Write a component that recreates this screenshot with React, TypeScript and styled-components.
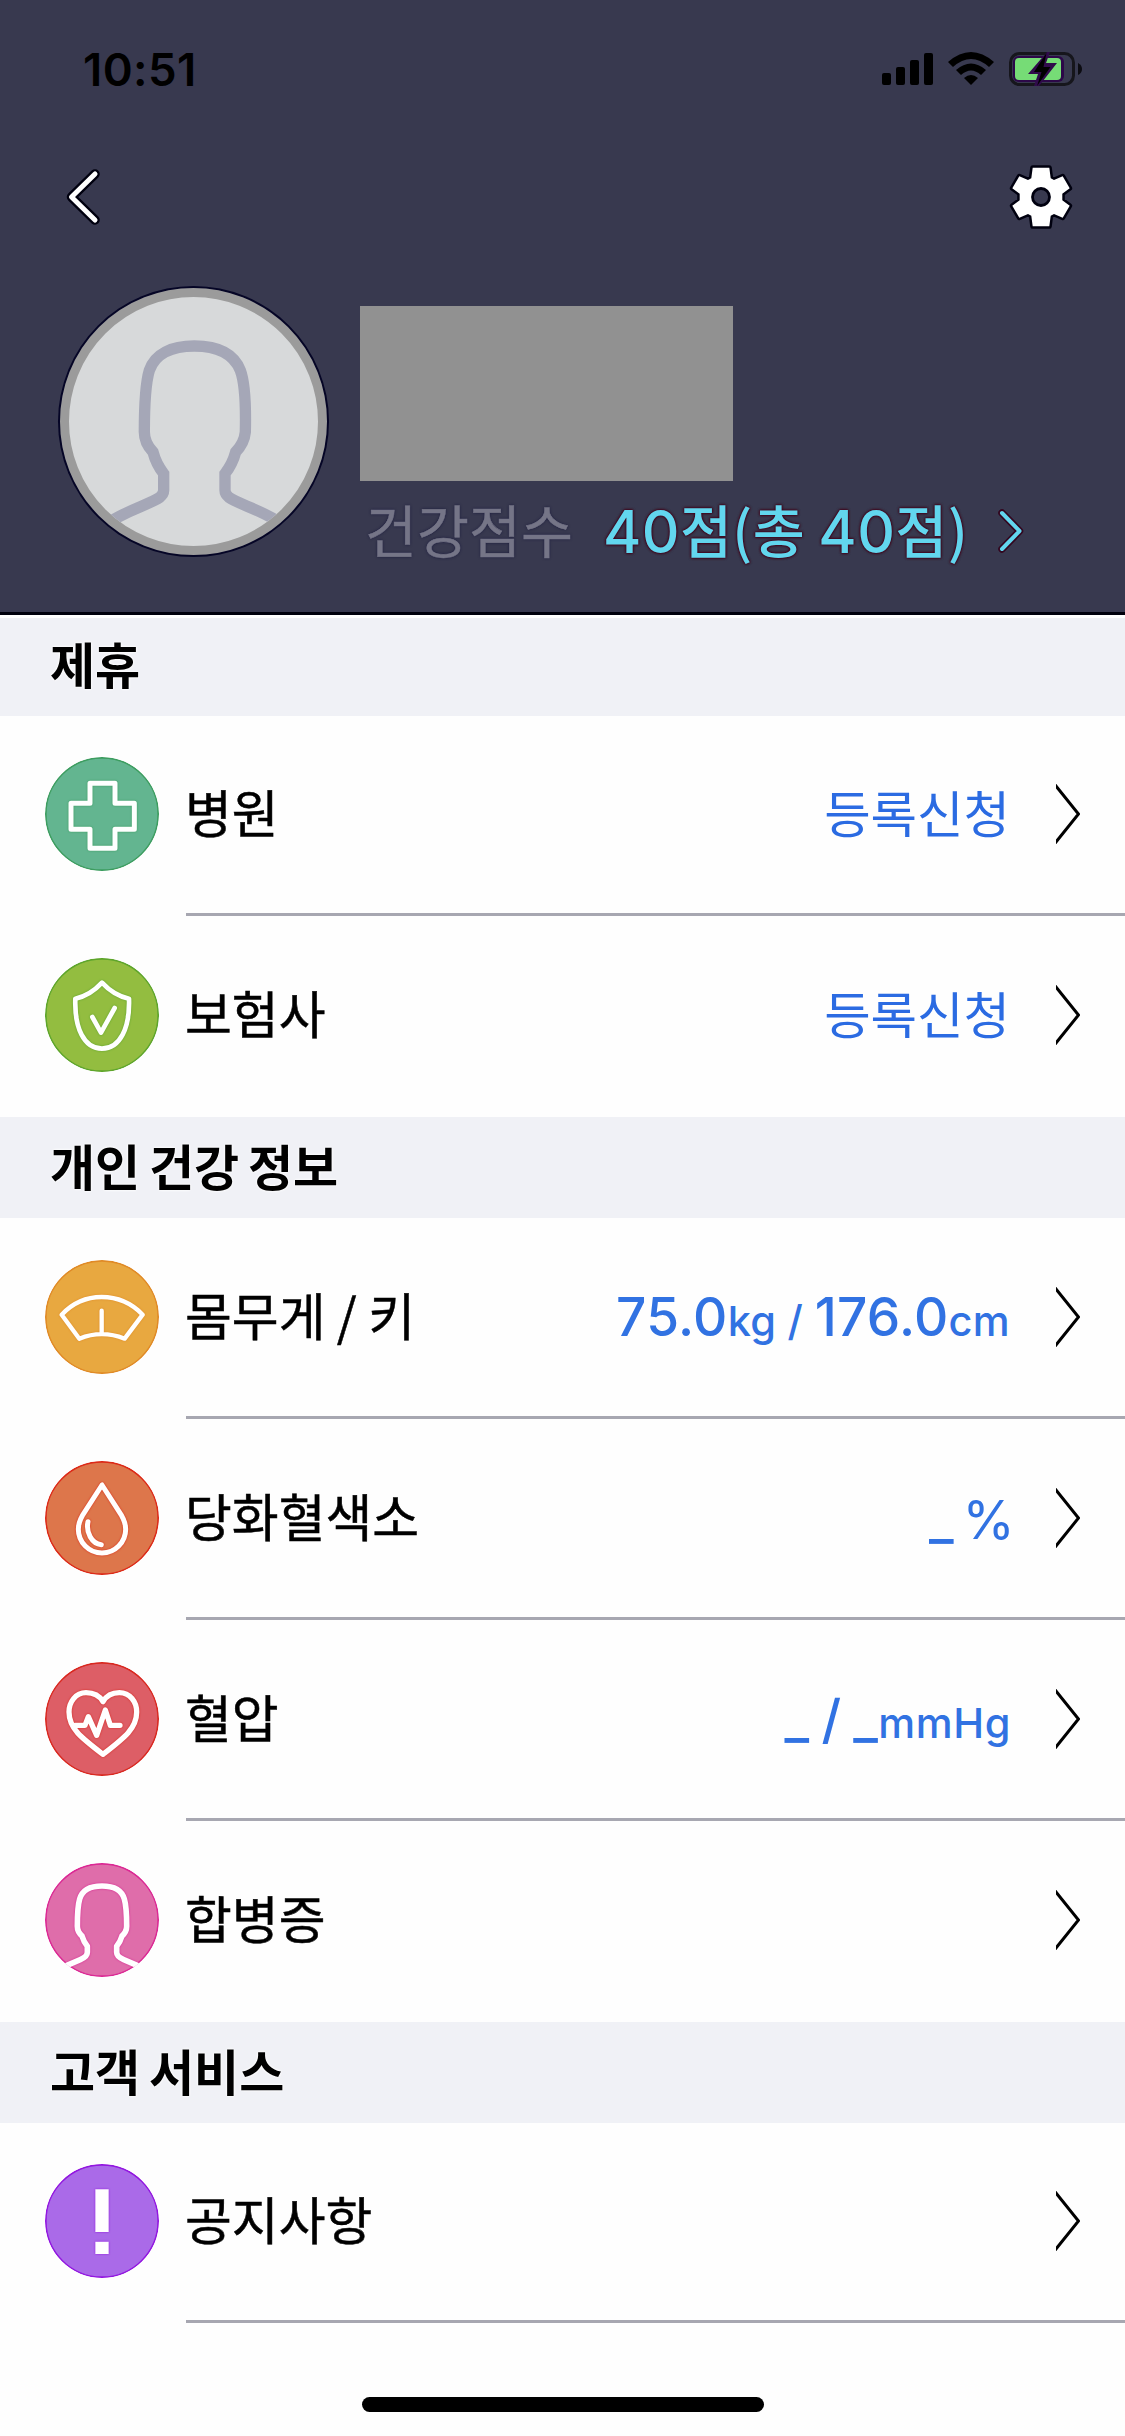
import React from "react";
import styled, { createGlobalStyle } from "styled-components";

const GlobalStyle = createGlobalStyle`
  * { box-sizing: border-box; }
  body { margin: 0; background: #fefefe; }
  svg { display: block; flex: none; }
`;

const korean = `"Noto Sans CJK KR", "Noto Sans", sans-serif`;
const latin = `Inter, "Noto Sans CJK KR", sans-serif`;

const Screen = styled.div`
  width: 1125px;
  height: 2436px;
  overflow: hidden;
  display: flex;
  flex-direction: column;
  background: #fefefe;
  color: #000;
  font-family: ${korean};
`;

const Header = styled.header`
  height: 615px;
  flex: none;
  background: #38394f;
  border-bottom: 3px solid #00000c;
`;

const StatusBar = styled.div`
  height: 137px;
  padding: 0 43px 0 83px;
  display: flex;
  justify-content: space-between;
  align-items: center;
`;

const Clock = styled.time`
  padding-top: 2px;
  font: 600 45.5px/50px ${latin};
  letter-spacing: 0.4px;
`;

const StatusIcons = styled.div`
  display: flex;
  gap: 15px;
`;

const NavBar = styled.nav`
  height: 120px;
  padding: 0 50px 0 63px;
  display: flex;
  justify-content: space-between;
  align-items: center;
`;

const Profile = styled.section`
  display: flex;
  padding: 31px 0 0 60px;
`;

const Avatar = styled.div`
  width: 267px;
  height: 267px;
  flex: none;
  border: 9px solid #9b9b9b;
  border-radius: 50%;
  background: #d7d9da;
  box-shadow: 0 0 0 2px #050526;
  overflow: hidden;
`;

const ProfileInfo = styled.div`
  margin-left: 33px;
  padding-top: 18px;
`;

const NameBlock = styled.div`
  width: 373px;
  height: 175px;
  background: #919191;
`;

const ScoreLine = styled.div`
  display: flex;
  align-items: center;
  height: 100px;
  padding-left: 5px;
  font-size: 56.5px;
  line-height: 94px;
  white-space: nowrap;
`;

const ScoreLabel = styled.span`
  height: 100px;
  width: 238px;
  color: #757587;
  -webkit-text-stroke: 0.5px #757587;
  text-shadow: 0 0 3px #16163a;
`;

const Score = styled.span`
  height: 100px;
  width: 395px;
  font-weight: 500;
  letter-spacing: 0.4px;
  color: #62d6ee;
  text-shadow: 0 0 3px #400018, 0 0 2px #400018, 0 0 3px #400018;
`;

const ScoreDigits = styled.span`
  font-family: Inter, sans-serif;
  font-size: 58.5px;
  font-weight: 500;
  line-height: 1;
`;

const SectionTitle = styled.h2<{ $first?: boolean }>`
  margin: 0;
  height: 101px;
  flex: none;
  padding-left: 50px;
  background: #f0f1f6;
  box-shadow: ${(p) => (p.$first ? "inset 0 3px #fff" : "none")};
  font-size: 49px;
  font-weight: 700;
  line-height: 95px;
  word-spacing: -2.3px;
  text-shadow: 0 0 3px #fff, 0 0 3px #fff;
`;

const Row = styled.div<{ $height: number }>`
  height: ${(p) => p.$height}px;
  flex: none;
  display: flex;
  flex-direction: column;
  justify-content: flex-end;
  padding-left: 45px;
`;

const RowBody = styled.div`
  height: 114px;
  margin-bottom: 42px;
  padding-right: 45px;
  display: flex;
  align-items: center;
`;

const Divider = styled.div<{ $visible: boolean }>`
  height: 3px;
  margin-left: 141px;
  background: ${(p) => (p.$visible ? "#a7a7b1" : "transparent")};
`;

const Label = styled.span`
  margin-left: 26px;
  padding-bottom: 6px;
  flex: 1;
  font-size: 50.9px;
  line-height: 80px;
  white-space: nowrap;
  -webkit-text-stroke: 0.5px #000;
`;

const Value = styled.span`
  margin-right: 46px;
  padding-bottom: 6px;
  color: #2b6be2;
  font-size: 50.5px;
  line-height: 80px;
  white-space: pre;
`;

const Measure = styled(Value)<{ $wordSpacing?: number; $shift?: number }>`
  margin-right: ${(p) => 46 - (p.$shift ?? 0)}px;
  padding: 3px 0 0;
  font-family: ${latin};
  font-weight: 500;
  font-size: 53.2px;
  letter-spacing: 0.3px;
  word-spacing: ${(p) => p.$wordSpacing ?? 0}px;
  color: #3172e2;
`;

const Unit = styled.span`
  font-size: 41.5px;
`;

const Pressure = styled.span`
  font-size: 41.5px;
  letter-spacing: 0.6px;
`;

const Percent = styled.span`
  font-weight: 400;
`;

const Badge = styled.svg<{ $edge: string }>`
  width: 114px;
  height: 114px;
  clip-path: circle(50%);

  .disc { stroke: ${(p) => p.$edge}; stroke-width: 5; }
  .glyph {
    fill: none;
    stroke: #fff;
    stroke-linecap: round;
    stroke-linejoin: round;
    filter: drop-shadow(0 0 3px ${(p) => p.$edge});
  }
`;

const HomeArea = styled.footer`
  padding-top: 74px;
  display: flex;
  justify-content: center;
`;

const HomeIndicator = styled.div`
  width: 402px;
  height: 15px;
  border-radius: 8px;
  background: #000;
`;

type BadgeKind = "cross" | "shield" | "scale" | "drop" | "heart" | "person" | "notice";

const badges: Record<BadgeKind, { fill: string; edge: string; width: number; art: React.ReactNode }> = {
  cross: {
    fill: "#63b590",
    edge: "#3d9d60",
    width: 15,
    art: <path d="M135 79H210V139H268V217H210V274H135V217H78V139H135Z" />,
  },
  shield: {
    fill: "#93bd40",
    edge: "#5ea52b",
    width: 14,
    art: (
      <>
        <path d="M171 74Q207 113 252 122C255 210 225 272 171 272C117 272 88 210 91 122Q135 113 171 74Z" />
        <path d="M142 177L168 224L209 150" />
      </>
    ),
  },
  scale: {
    fill: "#e8a840",
    edge: "#e08a26",
    width: 13,
    art: (
      <path d="M50 164Q100 111 170 111Q242 111 293 164L239 236Q170 209 103 236ZM170 152V220" />
    ),
  },
  drop: {
    fill: "#dd764b",
    edge: "#dc2a18",
    width: 15,
    art: (
      <>
        <path d="M171 72L112 164C104 178 100 190 100 205A71 71 0 0 0 242 205C242 190 238 178 230 164Z" />
        <path d="M129 182C122 213 140 248 169 251" />
      </>
    ),
  },
  heart: {
    fill: "#dd5e66",
    edge: "#d92820",
    width: 16,
    art: (
      <>
        <path d="M174 119C163 100 145 92 123 92C92 92 72 120 72 150C72 200 110 228 174 277C237 228 275 200 275 150C275 120 255 92 223 92C203 92 185 100 174 119Z" />
        <path d="M90 190H120L130 164L155 220L181 144L196 190H225" />
      </>
    ),
  },
  person: {
    fill: "#df6daa",
    edge: "#db2894",
    width: 17,
    art: (
      <path d="M50 314L106 290Q127 281 127 268V250Q116 236 111 219Q97 207 97 190C97 150 99 125 104 108C112 80 138 69 171 69C204 69 230 80 238 108C243 125 245 150 245 190Q245 207 231 219Q226 236 215 250V268Q215 281 236 290L292 314" />
    ),
  },
  notice: {
    fill: "#aa6ae8",
    edge: "#9216e0",
    width: 0,
    art: <path fill="#fff" d="M151 76H191V204H151ZM151 233H191V270H151Z" />,
  },
};

function RowBadge({ kind }: { kind: BadgeKind }) {
  const { fill, edge, width, art } = badges[kind];
  return (
    <Badge viewBox="0 0 342 342" $edge={edge}>
      <circle className="disc" cx="171" cy="171" r="168.5" fill={fill} />
      <g className="glyph" strokeWidth={width}>{art}</g>
    </Badge>
  );
}

function RowChevron() {
  return (
    <svg width="24" height="60" viewBox="0 0 24 60" fill="none" stroke="#000" strokeWidth="3">
      <path d="M-2 -0.5L22.5 30L-2 60.500" />
    </svg>
  );
}

function SignalIcon() {
  return (
    <svg width="51" height="34" viewBox="0 0 51 34">
      <rect x="0" y="21" width="9" height="12" rx="2" />
      <rect x="14" y="15" width="9" height="18" rx="2" />
      <rect x="28" y="8" width="9" height="25" rx="2" />
      <rect x="42" y="1" width="9" height="32" rx="2" />
    </svg>
  );
}

function WifiIcon() {
  return (
    <svg width="46" height="34" viewBox="0 0 46 34">
      <path d="M0 10Q23 -10 46 10L41 15Q23 -1 5 15Z" />
      <path d="M8 18Q23 5 38 18L33 23Q23 14 13 23Z" />
      <path d="M16 26Q23 20 30 26L23 33Z" />
    </svg>
  );
}

function BatteryIcon() {
  return (
    <svg width="73" height="34" viewBox="0 0 73 34">
      <rect x="1.5" y="1.5" width="63" height="31" rx="9" fill="none" stroke="#16161c" strokeWidth="3" />
      <path d="M69 11Q73 13 73 17T69 23Z" fill="#0c0c12" />
      <rect x="4" y="4" width="51" height="26" rx="6" fill="#2c0848" />
      <rect x="6" y="6" width="46" height="22" rx="4" fill="#76dc76" />
      <path d="M38 0L19 22H29L25 34H30L48 11H37L41 0Z" fill="#300b4b" />
      <path d="M37.500 1L25 20H32.500L28 34L41.500 15H34.500Z" fill="#000" />
    </svg>
  );
}

function BackIcon() {
  return (
    <svg width="40" height="60" viewBox="0 0 40 60" fill="none" strokeLinecap="round" strokeLinejoin="round">
      <path d="M32 7L8.500 30L32 53" stroke="#00000f" strokeWidth="9.500" />
      <path d="M32 7L8.500 30L32 53" stroke="#fff" strokeWidth="5" />
    </svg>
  );
}

function GearIcon() {
  return (
    <svg width="68" height="68" viewBox="-34 -34 68 68" strokeLinejoin="round">
      <path
        d="M-8.300 -29.300H8.300L9.700 -18.700L13 -17L21.700 -20.700L28.700 -8.700L21.300 -3.300V3.300L28.700 8.700L21.700 20.700L13 17L9.700 18.700L8.300 29.300H-8.300L-9.700 18.700L-13 17L-21.700 20.700L-28.700 8.700L-21.300 3.300V-3.300L-28.700 -8.700L-21.700 -20.700L-13 -17L-9.700 -18.700Z"
        fill="#fff"
        stroke="#00000f"
        strokeWidth="5"
        paintOrder="stroke"
      />
      <circle r="8.500" fill="#38394f" stroke="#00000f" strokeWidth="2.800" />
    </svg>
  );
}

function AvatarFigure() {
  return (
    <svg width="249" height="249" viewBox="207 110 747 747" fill="none" stroke="#a5a7b7" strokeWidth="34">
      <path d="M310 798C370 752 450 732 478 712Q491 702 491 690V640Q468 610 459 575Q433 548 433 515C433 430 436 370 448 330C465 280 515 257 583 257C651 257 701 280 721 330C736 370 738 430 736 515Q733 548 707 575Q698 610 675 640V690Q675 702 688 712C716 732 796 752 856 798" />
    </svg>
  );
}

interface Item {
  label: string;
  badge: BadgeKind;
  height: number;
  divider: boolean;
  value?: React.ReactNode;
}

const partners: Item[] = [
  { label: "병원", badge: "cross", height: 200, divider: true, value: <Value>등록신청</Value> },
  { label: "보험사", badge: "shield", height: 201, divider: false, value: <Value>등록신청</Value> },
];

const health: Item[] = [
  {
    label: "몸무게 / 키",
    badge: "scale",
    height: 201,
    divider: true,
    value: <Measure>75.0<Unit>kg / </Unit>176.0<Unit>cm</Unit></Measure>,
  },
  {
    label: "당화혈색소",
    badge: "drop",
    height: 201,
    divider: true,
    value: <Measure $wordSpacing={-6} $shift={5}>_ <Percent>%</Percent></Measure>,
  },
  {
    label: "혈압",
    badge: "heart",
    height: 201,
    divider: true,
    value: <Measure $wordSpacing={-2.5} $shift={1}>_ / _<Pressure>mmHg</Pressure></Measure>,
  },
  { label: "합병증", badge: "person", height: 201, divider: false },
];

const support: Item[] = [{ label: "공지사항", badge: "notice", height: 200, divider: true }];

function Section({ title, items, first }: { title: string; items: Item[]; first?: boolean }) {
  return (
    <>
      <SectionTitle $first={first}>{title}</SectionTitle>
      {items.map((item) => (
        <Row key={item.label} $height={item.height}>
          <RowBody>
            <RowBadge kind={item.badge} />
            <Label>{item.label}</Label>
            {item.value}
            <RowChevron />
          </RowBody>
          <Divider $visible={item.divider} />
        </Row>
      ))}
    </>
  );
}

export default function App() {
  return (
    <>
      <GlobalStyle />
      <Screen>
        <Header>
          <StatusBar>
            <Clock>10:51</Clock>
            <StatusIcons>
              <SignalIcon />
              <WifiIcon />
              <BatteryIcon />
            </StatusIcons>
          </StatusBar>
          <NavBar>
            <BackIcon />
            <GearIcon />
          </NavBar>
          <Profile>
            <Avatar>
              <AvatarFigure />
            </Avatar>
            <ProfileInfo>
              <NameBlock />
              <ScoreLine>
                <ScoreLabel>건강점수</ScoreLabel>
                <Score>
                  <ScoreDigits>40</ScoreDigits>점(총 <ScoreDigits>40</ScoreDigits>점)
                </Score>
                <svg width="26" height="46" viewBox="0 0 26 46" fill="none" strokeLinecap="round" strokeLinejoin="round">
                  <path d="M4 5L21.500 23L4 41" stroke="#33061f" strokeWidth="7.500" />
                  <path d="M4 5L21.500 23L4 41" stroke="#62d6ee" strokeWidth="4" />
                </svg>
              </ScoreLine>
            </ProfileInfo>
          </Profile>
        </Header>
        <Section title="제휴" items={partners} first />
        <Section title="개인 건강 정보" items={health} />
        <Section title="고객 서비스" items={support} />
        <HomeArea>
          <HomeIndicator />
        </HomeArea>
      </Screen>
    </>
  );
}
